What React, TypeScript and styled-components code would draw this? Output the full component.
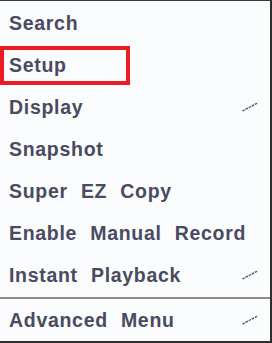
import React from 'react'
import styled, { createGlobalStyle } from 'styled-components'

const GlobalStyle = createGlobalStyle`
  html, body {
    margin: 0;
    padding: 0;
    background: #fafcfd;
  }
`

const Panel = styled.div`
  width: 272px;
  height: 343px;
  box-sizing: border-box;
  padding-top: 1px;
  background: #fafcfd;
  border-top: 1px solid #3a3a3a;
  border-right: 2px solid #2e2e2e;
  border-bottom: 2px solid #2e2e2e;
  display: flex;
  flex-direction: column;
  font-family: "Liberation Sans", Arial, sans-serif;
`

const Row = styled.div`
  height: 42px;
  display: flex;
  align-items: center;
  justify-content: space-between;
  padding-right: 12px;
  flex-shrink: 0;
`

const Label = styled.div<{ $selected?: boolean }>`
  box-sizing: border-box;
  width: 130px;
  height: 39px;
  display: flex;
  align-items: center;
  padding-left: 5px;
  border: 4px solid ${({ $selected }) => ($selected ? '#ec1c24' : 'transparent')};
  color: #4a4a60;
  font-size: 19.5px;
  font-weight: bold;
  letter-spacing: 0.7px;
  word-spacing: 7px;
  white-space: nowrap;
  overflow: visible;
`

const Divider = styled.div`
  height: 2px;
  background: #8c8c8c;
  margin: 1px 0 0;
  flex-shrink: 0;
`

const SubMark = () => (
  <svg width="16" height="10" viewBox="0 0 16 10">
    <line x1="0.5" y1="9" x2="15.5" y2="1" stroke="#4a4a5e" strokeWidth="1.3" strokeDasharray="2.5 1" />
  </svg>
)

const items = [
  { label: 'Search' },
  { label: 'Setup', selected: true },
  { label: 'Display', sub: true },
  { label: 'Snapshot' },
  { label: 'Super EZ Copy' },
  { label: 'Enable Manual Record' },
  { label: 'Instant Playback', sub: true },
]

export default function App() {
  return (
    <>
      <GlobalStyle />
      <Panel>
        {items.map((item) => (
          <Row key={item.label}>
            <Label $selected={item.selected}>{item.label}</Label>
            {item.sub && <SubMark />}
          </Row>
        ))}
        <Divider />
        <Row>
          <Label>Advanced Menu</Label>
          <SubMark />
        </Row>
      </Panel>
    </>
  )
}
